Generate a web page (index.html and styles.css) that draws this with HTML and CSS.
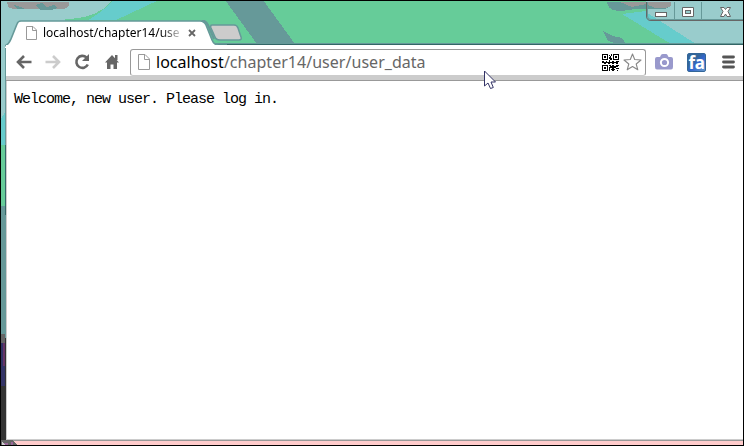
FILE: index.html
```html
<!DOCTYPE html>
<html lang="en">
<head>
<meta charset="utf-8">
<title>localhost/chapter14/user/user_data</title>
<link rel="stylesheet" href="styles.css">
</head>
<body>
<div class="window">
  <svg class="backdrop" width="744" height="446" viewBox="0 0 744 446" shape-rendering="crispEdges" aria-hidden="true">
    <rect width="744" height="446" fill="#99cccc"/>
    <path d="M113 0H660L704 45H65V19Q88 19 103 9Z" fill="#66cc99"/>
    <path d="M113 0H159L116 20H88Q103 12 113 0Z" fill="#66cccc"/>
    <path d="M225 0H263L295 44H257Z" fill="#669999"/>
    <path d="M622 14L646 11L696 44H671Z" fill="#66cccc"/>
    <path d="M646 0H742V44H696L646 12Z" fill="#99cccc"/>
    <path d="M7 2H69V5Q67 9 62 9H16Q8 9 8 5Z" fill="#999"/>
    <path d="M14 5l7 2 4 2h-8zM35 5l7-2 5 4 7-2 3 3-6 2h-10z" fill="#669999"/>
    <path d="M607 2H671V5Q669 9 661 9H635L621 11Q608 11 607 2Z" fill="#669999"/>
    <path d="M620 2H671V6Q666 9 655 8L646 4 632 7Z" fill="#999"/>
    <path d="M603 31L613 36L622 38L626 44H617L608 41Z" fill="#669999"/>
    <path d="M1 119L5 112V146H1Z" fill="#66cccc"/>
    <rect x="1" y="145" width="4" height="61" fill="#66cc99"/>
    <rect x="1" y="206" width="4" height="130" fill="#669999"/>
    <rect x="1" y="334" width="4" height="10" fill="#666"/>
    <rect x="1" y="343" width="4" height="43" fill="#333366"/>
    <rect x="3" y="343" width="2" height="23" fill="#663366"/>
    <rect x="1" y="386" width="5" height="59" fill="#333"/>
    <rect x="5" y="48" width="1" height="290" fill="#669999"/>
    <rect x="5" y="145" width="1" height="70" fill="#336666"/>
    <rect x="5" y="338" width="1" height="107" fill="#333"/>
    <rect x="0" y="440" width="744" height="1" fill="#999"/>
    <rect x="5" y="441" width="739" height="5" fill="#ffcccc"/>
    <path d="M1 440H12L18 445H1Z" fill="#666"/><path d="M4 443h4v2h-4zM11 442h2v3h-2z" fill="#996699"/>
    <path d="M2 442l3 3H2z" fill="#ccc"/>
    <rect x="210" y="43" width="534" height="1" fill="#669999"/>
    <rect x="210" y="44" width="534" height="1" fill="#336666"/>
  </svg>

  <header class="tabstrip">
    <div class="tab">
      <svg class="tab-shape" width="222" height="28" viewBox="0 0 222 28" aria-hidden="true">
        <path d="M0 28V26Q4 24 6 19L12 4Q13 1 16 1H195Q199 1 201 5L207 20Q209 25 214 26V28Z" fill="#fff"/>
        <path d="M0 26Q4 24 6 19L12 4Q13 1 16 1H195Q199 1 201 5L207 20Q209 25 214 25H222" fill="none" stroke="#669999" stroke-width="1.600"/>
        <path d="M197 0Q201 1 203 5L209 19" fill="none" stroke="#669999" stroke-width="2"/>
      </svg>
      <svg class="page-icon" width="11" height="14" viewBox="0 0 11 14"><path d="M.5 .5H7L10.5 4V13.5H.5ZM6.500 .5V4.500H10.500" fill="#fff" stroke="#999"/></svg>
      <span class="tab-title">localhost/chapter14/use</span>
      <svg class="tab-close" width="8" height="8" viewBox="0 0 8 8"><path d="M1 1L7 7M7 1L1 7" stroke="#666" stroke-width="1.800"/></svg>
    </div>
    <svg class="new-tab" width="33" height="18" viewBox="0 0 33 18"><path d="M3 1H25Q28 1 29 4L32 13Q33 16 30 16H11Q7 16 6 13L2 4Q1 1 3 1Z" fill="#ccc" stroke="#669999" stroke-width="1.500"/></svg>
    <svg class="window-buttons" width="97" height="20" viewBox="0 0 97 20">
      <path d="M.5 0V14Q.5 18.500 5 18.500H97" fill="none" stroke="#666"/>
      <path d="M1.500 0V14Q1.500 17.500 5 17.500H97M28.500 0V17M55.500 0V17" fill="none" stroke="#669999"/>
      <rect x="9.500" y="10.500" width="11" height="4" fill="#fff" stroke="#666"/>
      <path d="M36.500 5.500H47.500V14.500H36.500Z" fill="#fff" stroke="#666"/><rect x="39.500" y="8.500" width="5" height="3" fill="#99cccc" stroke="#666"/>
      <path d="M74.500 5.500H78L79.500 7.500L81 5.500H84.500L82 9.500L84.500 14.500H81L79.500 12L78 14.500H74.500L77 9.500Z" fill="#fff" stroke="#666"/>
    </svg>
  </header>

  <nav class="toolbar">
    <svg class="nav-icon back" width="16" height="14" viewBox="0 0 16 14"><path d="M15.500 7H2.500M8 1L2 7L8 13" fill="none" stroke="#666" stroke-width="2.600"/></svg>
    <svg class="nav-icon forward" width="16" height="14" viewBox="0 0 16 14"><path d="M.5 7H13.500M8 1L14 7L8 13" fill="none" stroke="#ccc" stroke-width="2.600"/></svg>
    <svg class="nav-icon reload" width="16" height="16" viewBox="0 0 16 16"><path d="M12.500 3.500A6 6 0 1 0 13.800 10.500" fill="none" stroke="#666" stroke-width="2.600"/><path d="M15 0V7H8Z" fill="#666"/></svg>
    <svg class="nav-icon home" width="14" height="14" viewBox="0 0 14 14"><path d="M7 0L14 7.500H12V14H8.500V9.500H5.500V14H2V7.500H0ZM10 0H12.500V5H10Z" fill="#666"/></svg>
    <div class="omnibox">
      <svg class="page-icon" width="12" height="16" viewBox="0 0 12 16"><path d="M.5 .5H7L11.500 5V15.500H.5ZM6.500 .5V5.500H11.500" fill="#fff" stroke="#999"/></svg>
      <span class="url"><span class="host">localhost</span>/chapter14/user/user_data</span>
      <svg class="qr" width="17" height="17" viewBox="0 0 17 17" shape-rendering="crispEdges">
        <path d="M0 0h6v6H0zM1 1v4h4V1zM11 0h6v6h-6zM12 1v4h4V1zM0 11h6v6H0zM1 12v4h4v-4z" fill="#000" fill-rule="evenodd"/>
        <path d="M2 2h2v2H2zM13 2h2v2h-2zM2 13h2v2H2zM7 1h1v1h1V0h1v2H9v2h1v2H8V5H7V3h1V2H7zM0 7h2v1h2V7h1v1h2V6h1v2h2v1H8v1H6V9H4v1H2V9H0zM10 7h2v1h2V7h3v1h-1v2h-2V9h-2v1h-2zM7 11h2v1h1v-1h2v1h2v-1h3v1h-1v1h-2v1h2v1h-2v-1h-2v1h1v1h-1v1h-2v-1H9v-1h1v-1H8v3H7v-4h1v-1H7zM15 14h2v1h-2zM15 16h1v1h-1z" fill="#000"/>
      </svg>
      <svg class="star" width="19" height="18" viewBox="0 0 19 18"><path d="M9.500 1L11.700 6.500L18 7L13.200 11L14.800 16.800L9.500 13.500L4.200 16.800L5.800 11L1 7L7.300 6.500Z" fill="#fff" stroke="#888" stroke-width="1.100" stroke-linejoin="round"/></svg>
    </div>
    <svg class="camera" width="18" height="16" viewBox="0 0 18 16"><path d="M2 3H5L6 1Q6.500 0 8 0H11Q12 0 12.500 1L13.500 3H16Q18 3 18 5V13Q18 15.500 16 15.500H2Q0 15.500 0 13V5Q0 3 2 3Z" fill="#9999cc"/><circle cx="9.500" cy="8.500" r="3.600" fill="#9999cc" stroke="#fff" stroke-width="2"/></svg>
    <div class="fa-badge"><span>fa</span></div>
    <svg class="menu" width="13" height="14" viewBox="0 0 13 14"><path d="M1.500 2H11.500M1.500 7H11.500M1.500 12H11.500" stroke="#555" stroke-width="2.800" stroke-linecap="round"/></svg>
  </nav>

  <main class="page">Welcome, new user. Please log in.</main>

  <svg class="cursor" width="14" height="20" viewBox="0 0 14 20"><path d="M1.500 1V16L5 13L7.500 18.500L10.300 17.500L8 12H12.500Z" fill="#fff" stroke="#333366"/></svg>
</div>
</body>
</html>
```
FILE: styles.css
```css
* { box-sizing: border-box; }
body { margin: 0; background: #000; }
svg { display: block; flex: none; }

.window {
  position: relative;
  width: 744px;
  height: 446px;
  padding: 1px 0 5px 5px;
  border: 1px solid #000;
  overflow: hidden;
  display: flex;
  flex-direction: column;
}
.backdrop { position: absolute; left: -1px; top: -1px; }

.tabstrip {
  position: relative;
  height: 43px;
  flex: none;
  display: flex;
  align-items: flex-end;
  padding-top: 18px;
}
.tab {
  position: relative;
  width: 203px;
  height: 25px;
  flex: none;
  display: flex;
  align-items: center;
  padding-left: 20px;
}
.tab .page-icon { position: relative; }
.tab-shape { position: absolute; left: -1px; top: 0; }
.tab-title {
  position: relative;
  width: 138px;
  margin-left: 6px;
  white-space: nowrap;
  font: 12px/18px "Noto Sans", sans-serif;
  color: #000;
  -webkit-mask-image: linear-gradient(to right, #000 118px, transparent 142px);
  mask-image: linear-gradient(to right, #000 118px, transparent 142px);
}
.tab-close { position: relative; margin-left: 7px; }
.new-tab { position: relative; margin-bottom: 3px; }
.window-buttons { position: absolute; right: 0; top: 0; }

.toolbar {
  position: relative;
  height: 36px;
  flex: none;
  display: flex;
  align-items: center;
  padding: 0 8px 1px 10px;
  background: #fff;
  border-bottom: 1px solid #999;
  box-shadow: inset 0 -4px #ccc;
}
.forward { margin-left: 13px; }
.reload { margin-left: 13px; }
.home { margin-left: 15px; }
.omnibox {
  display: flex;
  align-items: center;
  width: 517px;
  height: 27px;
  margin-left: 11px;
  padding: 0 3px 0 7px;
  border: 1px solid #999;
  border-bottom-color: #ccc;
  border-radius: 3px;
  background: #fff;
}
.url {
  flex: 1;
  margin-left: 6px;
  font: 16px/24px "Noto Sans", sans-serif;
  letter-spacing: 0.03px;
  color: #666;
  white-space: nowrap;
}
.host { color: #000; }
.star { margin-left: 4px; }
.camera { margin-left: 9px; }
.fa-badge {
  width: 19px;
  height: 19px;
  flex: none;
  margin-left: 14px;
  border: 1px solid #336699;
  border-radius: 2px;
  background: linear-gradient(135deg, #336699 35%, #3366cc 55%, #6699cc);
  color: #fff;
  font: bold 17px/17px "Noto Sans", sans-serif;
  letter-spacing: -0.5px;
  display: flex;
  justify-content: center;
}
.menu { margin-left: 16px; }

.page {
  position: relative;
  flex: 1;
  background: #fff;
  border-left: 1px solid #ccc;
  border-bottom: 1px solid #ccc;
  padding: 9px 7px;
  font: 15px/20px "Liberation Mono", monospace;
  letter-spacing: -1px;
  color: #000;
}
.cursor { position: absolute; left: 482px; top: 69px; }
```
